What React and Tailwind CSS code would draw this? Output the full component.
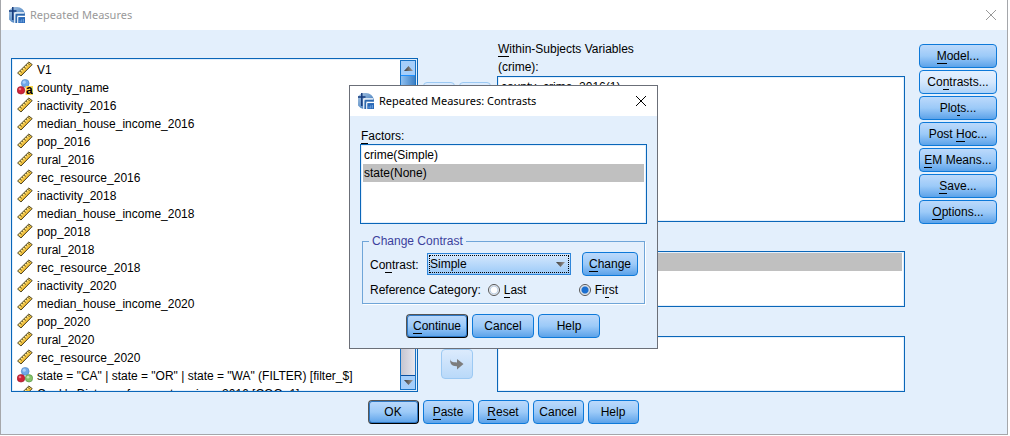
import React from "react";

const scaleNames = [
  "inactivity_2016", "median_house_income_2016", "pop_2016", "rural_2016", "rec_resource_2016",
  "inactivity_2018", "median_house_income_2018", "pop_2018", "rural_2018", "rec_resource_2018",
  "inactivity_2020", "median_house_income_2020", "pop_2020", "rural_2020", "rec_resource_2020",
];

const variables = [
  { kind: "scale", name: "V1" },
  { kind: "string", name: "county_name" },
  ...scaleNames.map((name) => ({ kind: "scale", name })),
  { kind: "nominal", name: 'state = "CA" | state = "OR" | state = "WA" (FILTER) [filter_$]' },
  { kind: "scale", name: "Cook's Distance for county_crime_2016 [COO_1]" },
];

function ScaleIcon() {
  return (
    <svg className="size-4 shrink-0" viewBox="0 0 16 16" aria-hidden="true">
      <path d="M.6 12 11.8 1 15.2 3.6 4 15z" fill="#f8cd4e" stroke="#3a3418" strokeWidth=".9" strokeLinejoin="round" />
      <path d="M1.9 12 11.8 2.2" stroke="#fff0a8" strokeWidth=".8" />
      <path d="m3.2 10.2 1.5 1.2M5.2 8.2l1 .8M7.2 6.2l1.5 1.2M9.2 4.2l1 .8M11.2 2.6l1.4 1" stroke="#3a3418" strokeWidth=".9" fill="none" />
      <path d="m4.2 13.6 9.8-9.8" stroke="#d49b1c" strokeWidth=".9" />
    </svg>
  );
}

function NominalIcon({ string }) {
  return (
    <svg className="size-4 shrink-0" viewBox="0 0 16 16" aria-hidden="true">
      <circle cx="8.2" cy="4.3" r="3.9" fill="#6fa8e8" stroke="#4a7fc0" strokeWidth=".6" />
      <circle cx="7.2" cy="3.2" r="1.6" fill="#a9d0fa" />
      <circle cx="4" cy="11.3" r="3.8" fill="#cf2237" stroke="#941426" strokeWidth=".6" />
      <circle cx="3" cy="10" r="1.3" fill="#ef7a86" />
      {string ? (
        <>
          <rect x="8.6" y="7" width="7.4" height="9" fill="#fbd34c" />
          <text x="9" y="14.8" fontSize="12" fontWeight="700" fontFamily="Liberation Sans, sans-serif" fill="#000">a</text>
        </>
      ) : (
        <>
          <circle cx="12" cy="11.3" r="3.7" fill="#86c46a" stroke="#4e8f3c" strokeWidth=".6" />
          <circle cx="11" cy="10.2" r="1.4" fill="#c3e8b0" />
        </>
      )}
    </svg>
  );
}

function AppIcon() {
  return (
    <svg className="size-4 shrink-0" viewBox="0 0 16 16" aria-hidden="true">
      <defs>
        <linearGradient id="globe" x1="0" y1="0" x2="1" y2="1">
          <stop offset="0" stopColor="#b4cde6" />
          <stop offset=".5" stopColor="#6d9bcd" />
          <stop offset="1" stopColor="#1d5cab" />
        </linearGradient>
      </defs>
      <path d="M8 0a8 8 0 0 1 8 7v9H5.5A8 8 0 0 1 8 0z" fill="url(#globe)" />
      <path d="M5.8 5.8H15M5.8 5.8V16M8.8 9.4H16M8.8 9.4V16" stroke="#fff" strokeWidth="1.2" fill="none" />
      <path d="M7.3 7.6h8.2M7.3 7.6V16" stroke="#2c66ab" strokeWidth="1.2" fill="none" />
      <path d="M0 4h7.5M3.8 0v13" stroke="#153a7c" strokeWidth="1.5" fill="none" />
      <path d="M9.6 10.4H16V16H9.6z" fill="#2a69b8" />
      <path d="M11 15.4v-2M12.7 15.4v-3M14.4 15.4V12" stroke="#7fb0e6" strokeWidth=".8" />
    </svg>
  );
}

function CloseIcon() {
  return (
    <svg className="size-3" viewBox="0 0 12 12" fill="none" stroke="currentColor" strokeWidth="1" aria-hidden="true">
      <path d="m1 1 10 10M11 1 1 11" />
    </svg>
  );
}

function Triangle({ up }) {
  return (
    <svg className="h-[5px] w-[9px]" viewBox="0 0 9 5" aria-hidden="true">
      <defs>
        <linearGradient id="tri" x1="0" x2="1">
          <stop offset="0" stopColor="#3c3c3c" />
          <stop offset="1" stopColor="#a09a96" />
        </linearGradient>
      </defs>
      <path d={up ? "M0 5 4.5 0 9 5z" : "M0 0h9L4.5 5z"} fill="url(#tri)" />
    </svg>
  );
}

/* Underlines the mnemonic character that follows "&". */
function Mnemonic({ text }) {
  const at = text.indexOf("&");
  if (at < 0) return text;
  return (
    <>
      {text.slice(0, at)}
      <span className="border-b border-current">{text[at + 1]}</span>
      {text.slice(at + 2)}
    </>
  );
}

const tones = {
  normal: "border-[#0d79d9] bg-linear-to-b from-[#bcd9fb] via-[#9ccaf8] to-[#5ba2e9]",
  light: "border-[#0d79d9] bg-linear-to-b from-[#e4f0fe] via-[#d5e8fd] to-[#acd2f8]",
  primary:
    "border-t-[#555] border-l-[#555] border-r-black border-b-black bg-linear-to-b from-[#bcd9fb] via-[#9ccaf8] to-[#5ba2e9] shadow-[inset_0_0_0_1px_#2f78c4]",
};

function Button({ text, size, tone = "normal" }) {
  return (
    <button type="button" className={`flex h-6 items-center justify-center rounded border leading-4 whitespace-nowrap ${size} ${tones[tone]}`}>
      <span><Mnemonic text={text} /></span>
    </button>
  );
}

function MoveButton({ label, children }) {
  return (
    <button type="button" disabled aria-label={label} className="flex h-[30px] w-8 items-center justify-center rounded border border-[#9cc9f3] bg-linear-to-b from-[#dcebfd] to-[#b9d9f9]">
      {children}
    </button>
  );
}

function TitleBar({ title, muted }) {
  return (
    <header className={`flex h-[30px] items-center bg-white pl-2 font-['Noto_Sans','Open_Sans',sans-serif] ${muted ? "pr-2.5 text-[#999]" : "pr-2.5 text-black"}`}>
      <AppIcon />
      <h2 className="ml-[5px] flex-1 text-[11px] leading-4">{title}</h2>
      <button type="button" aria-label="Close" className={muted ? "text-[#999]" : "text-black"}><CloseIcon /></button>
    </header>
  );
}

const box = "border border-[#0a66b8] bg-white p-px shadow-[inset_0_0_0_1px_#e3effc] overflow-hidden";

function ContrastsDialog() {
  return (
    <section role="dialog" aria-label="Repeated Measures: Contrasts" className="w-[309px] border border-[#6b6f78] bg-[#e3effc] pb-2.5">
      <TitleBar title="Repeated Measures: Contrasts" />
      <div className="px-2.5">
        <div id="factors" className="pt-3 pl-px leading-4"><Mnemonic text="&Factors:" /></div>
        <ul aria-labelledby="factors" className={`h-20 ${box}`}>
          <li className="mx-px h-[18px] px-px leading-[19px]">crime(Simple)</li>
          <li className="mx-px h-[18px] bg-[#c0c0c0] px-px leading-[19px]">state(None)</li>
        </ul>
        <fieldset className="mx-0.5 mt-2 border border-[#6fa5d8] px-1.5 pb-[3px] shadow-[1px_1px_0_#fff]">
          <legend className="px-[3px] leading-[18px] text-[#3c3f9c]">Change Contrast</legend>
          <div className="flex items-center pt-0.5">
            <label htmlFor="contrast" className="w-[58px] pt-0.5 pl-px"><Mnemonic text="Co&ntrast:" /></label>
            <div className="relative flex-1">
              <select id="contrast" defaultValue="Simple" className="block h-[22px] w-full appearance-none border border-[#2f86da] bg-linear-to-b from-[#d6e8fd] to-[#9ccaf8] px-0.5 leading-4 outline-1 -outline-offset-3 outline-dotted outline-black">
                <option>Simple</option>
              </select>
              <span className="pointer-events-none absolute inset-y-0 right-1.5 flex items-center"><Triangle /></span>
            </div>
            <div className="pl-[11px]"><Button text="&Change" size="w-14" /></div>
          </div>
          <div className="mt-1 flex h-5 items-center pl-px">
            <span>Reference Category:</span>
            <label className="ml-[7px] flex w-[91px] items-center gap-1">
              <input type="radio" name="ref" className="size-3 appearance-none rounded-full border border-[#555] bg-[radial-gradient(circle,#fff_0_40%,#b9cbe0_55%,#fff_70%)]" />
              <span><Mnemonic text="&Last" /></span>
            </label>
            <label className="flex items-center gap-1">
              <input type="radio" name="ref" defaultChecked className="size-3 appearance-none rounded-full border border-[#555] bg-[radial-gradient(circle,#1a6fd0_0_42%,#b9cbe0_55%,#fff_70%)]" />
              <span><Mnemonic text="Fi&rst" /></span>
            </label>
          </div>
        </fieldset>
        <div className="flex justify-center gap-1 pt-2.5 pr-px">
          <Button text="&Continue" size="w-[62px]" tone="primary" />
          <Button text="Cancel" size="w-[62px]" />
          <Button text="Help" size="w-[62px]" />
        </div>
      </div>
    </section>
  );
}

export default function App() {
  return (
    <div className="min-h-screen bg-white pr-0.5 pb-px font-['Liberation_Sans',Arial,sans-serif] text-[12px] leading-4 text-black">
      <main className="relative border border-t-0 border-[#a5a7ab] bg-[#e3effc] pb-2.5">
        <TitleBar title="Repeated Measures" muted />
        <div className="grid grid-cols-[407fr_79px_408fr_92px] pr-2.5 pl-2.5">
          <div className={`mt-7 flex h-[334px] ${box}`}>
            <ul className="min-w-0 flex-1 pl-1">
              {variables.map((v) => (
                <li key={v.name} className="flex h-[18px] items-center gap-1 whitespace-nowrap">
                  {v.kind === "scale" ? <ScaleIcon /> : <NominalIcon string={v.kind === "string"} />}
                  <span className="pt-px">{v.name}</span>
                </li>
              ))}
            </ul>
            <div className="flex w-4 flex-col border border-[#1872c4] bg-linear-to-r from-[#c5c5d0] to-[#e6e6ee]">
              <button type="button" aria-label="Scroll up" className="flex h-[14px] items-center justify-center bg-[#a5cefa]"><Triangle up /></button>
              <div className="h-[250px] border-y border-[#1e90ff] bg-linear-to-r from-[#8fc0f0] to-[#3c80c4]" />
              <div className="flex-1" />
              <button type="button" aria-label="Scroll down" className="flex h-[14px] items-center justify-center border-t border-[#0a4fa0] bg-[#a5cefa]"><Triangle /></button>
            </div>
          </div>

          <div className="flex flex-col items-center justify-between pt-[52px] pr-px pb-[13px]">
            <div className="flex gap-1">
              <MoveButton label="Move up" />
              <MoveButton label="Move down" />
            </div>
            <MoveButton label="Move to covariates">
              <svg className="h-3 w-4" viewBox="0 0 16 12" aria-hidden="true">
                <path d="M1 .5C1 3.6 3.4 4.4 8 4.4V1l6.5 5L8 11.4V8.2C3.2 8.4.8 6.5 1 .5z" fill="#7d7d7d" />
              </svg>
            </MoveButton>
          </div>

          <div className="flex flex-col">
            <div id="within" className="pt-2.5 pl-px leading-[18px]">
              <Mnemonic text="&Within-Subjects Variables" /><br />(crime):
            </div>
            <ul aria-labelledby="within" className={`h-[146px] ${box}`}>
              <li className="h-[18px] px-0.5 leading-[19px]">county_crime_2016(1)</li>
            </ul>
            <ul aria-label="Between-subjects factors" className={`mt-[29px] h-14 ${box}`}>
              <li className="mx-px h-[18px] bg-[#c0c0c0]" />
            </ul>
            <ul aria-label="Covariates" className={`mt-[29px] h-14 ${box}`} />
          </div>

          <div className="flex flex-col gap-0.5 pt-3.5 pl-3.5">
            <Button text="&Model..." size="w-full" />
            <Button text="Co&ntrasts..." size="w-full" tone="light" />
            <Button text="Plo&ts..." size="w-full" />
            <Button text="Post &Hoc..." size="w-full" />
            <Button text="&EM Means..." size="w-full" />
            <Button text="&Save..." size="w-full" />
            <Button text="&Options..." size="w-full" />
          </div>
        </div>
        <div className="flex justify-center gap-1 pt-2 pr-0.5">
          <Button text="OK" size="w-[51px]" tone="primary" />
          <Button text="&Paste" size="w-[51px]" />
          <Button text="&Reset" size="w-[51px]" />
          <Button text="Cancel" size="w-[51px]" />
          <Button text="Help" size="w-[51px]" />
        </div>
        <div className="absolute inset-x-0 top-[85px] flex justify-center pr-px">
          <ContrastsDialog />
        </div>
      </main>
    </div>
  );
}
